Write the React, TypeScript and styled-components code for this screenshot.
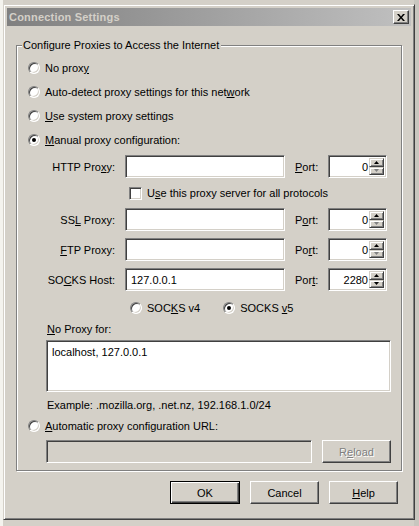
import React from "react";
import styled, { createGlobalStyle } from "styled-components";

const GlobalStyle = createGlobalStyle`
  html, body {
    margin: 0;
    padding: 0;
  }
  body {
    background: linear-gradient(90deg, #f4f3ee 0 3px, #d4d0c8 3px 414px, #c9c6bf 414px);
    font-family: "Liberation Sans", Tahoma, Arial, sans-serif;
    font-size: 11px;
    color: #000;
  }
`;

const Screen = styled.div`
  width: 419px;
  height: 526px;
  padding: 4px 0 0 3px;
  box-sizing: border-box;
  overflow: hidden;
`;

const Window = styled.div`
  width: 412px;
  height: 516px;
  box-sizing: border-box;
  background: #d4d0c8;
  border: 1px solid;
  border-color: #d4d0c8 #404040 #404040 #d4d0c8;
  box-shadow: inset 1px 1px 0 #fff, inset -1px -1px 0 #808080;
  padding: 3px;
  display: flex;
  flex-direction: column;
`;

const TitleBar = styled.div`
  height: 18px;
  display: flex;
  align-items: center;
  justify-content: space-between;
  background: linear-gradient(90deg, #808080, #c0c0c0);
  padding: 0 2px 0 2px;
`;

const TitleText = styled.span`
  font-weight: bold;
  color: #d4d0c8;
  font-size: 11px;
  letter-spacing: 0.2px;
`;

const CloseButton = styled.div`
  width: 16px;
  height: 14px;
  box-sizing: border-box;
  background: #d4d0c8;
  border: 1px solid;
  border-color: #fff #404040 #404040 #fff;
  box-shadow: inset -1px -1px 0 #808080;
  display: flex;
  align-items: center;
  justify-content: center;
`;

const Body = styled.div`
  flex: 1;
  display: flex;
  flex-direction: column;
  padding: 13px 12px 0 9px;
`;

const Group = styled.fieldset`
  margin: 0;
  width: 382px;
  box-sizing: border-box;
  height: 432px;
  border: 1px solid #808080;
  box-shadow: inset 1px 1px 0 #fff, 1px 1px 0 #fff;
  padding: 8px 10px 0 11px;
  display: flex;
  flex-direction: column;
`;

const Legend = styled.legend`
  padding: 0 2px 0 1px;
  margin-left: -6px;
  line-height: 13px;
  background: #d4d0c8;
`;

const RadioRow = styled.label<{ $top?: number }>`
  display: flex;
  align-items: center;
  gap: 5px;
  height: 16px;
  margin-top: ${(p) => p.$top ?? 8}px;
  white-space: nowrap;
`;

const RadioCircle = styled.span<{ $checked?: boolean }>`
  width: 12px;
  height: 12px;
  flex: none;
  box-sizing: border-box;
  border-radius: 50%;
  border: 1px solid;
  border-color: #808080 #fff #fff #808080;
  background: #fff;
  box-shadow: inset 1px 1px 0 #404040, inset -1px -1px 0 #d4d0c8;
  display: flex;
  align-items: center;
  justify-content: center;

  &::after {
    content: "";
    display: ${(p) => (p.$checked ? "block" : "none")};
    width: 4px;
    height: 4px;
    border-radius: 50%;
    background: #000;
  }
`;

const U = styled.span`
  text-decoration: underline;
  text-underline-offset: 1px;
`;

const ProxyGrid = styled.div`
  display: grid;
  grid-template-columns: 87px 160px 23px 59px;
  column-gap: 10px;
  row-gap: 7px;
  margin-top: 7px;
  align-items: center;
`;

const FieldLabel = styled.span`
  text-align: right;
  white-space: nowrap;
`;

const PortLabel = styled.span`
  white-space: nowrap;
`;

const Sunken = styled.div`
  box-sizing: border-box;
  border: 1px solid;
  border-color: #808080 #fff #fff #808080;
  box-shadow: inset 1px 1px 0 #404040, inset -1px -1px 0 #d4d0c8;
  background: #fff;
`;

const TextField = styled(Sunken)<{ $disabled?: boolean }>`
  height: 23px;
  display: flex;
  align-items: center;
  padding: 0 5px;
  background: ${(p) => (p.$disabled ? "#d4d0c8" : "#fff")};
`;

const SpinBox = styled(Sunken)`
  height: 23px;
  display: flex;
  align-items: stretch;
  padding: 2px;
`;

const SpinValue = styled.span`
  flex: 1;
  display: flex;
  align-items: center;
  justify-content: flex-end;
  padding-right: 1px;
`;

const SpinButtons = styled.div`
  width: 15px;
  display: flex;
  flex-direction: column;
`;

const SpinButton = styled.div`
  flex: 1;
  box-sizing: border-box;
  background: #d4d0c8;
  border: 1px solid;
  border-color: #d4d0c8 #404040 #404040 #d4d0c8;
  box-shadow: inset 1px 1px 0 #fff, inset -1px -1px 0 #808080;
  display: flex;
  align-items: center;
  justify-content: center;
`;

const CheckRow = styled.label`
  grid-column: 2 / 5;
  display: flex;
  align-items: center;
  gap: 5px;
  height: 16px;
  padding-left: 4px;
  white-space: nowrap;
`;

const CheckBox = styled(Sunken)`
  width: 13px;
  height: 13px;
  flex: none;
`;

const VersionRow = styled.div`
  display: flex;
  gap: 23px;
  margin: 9px 0 0 102px;
`;

const Indented = styled.div`
  margin-left: 18px;
  display: flex;
  flex-direction: column;
`;

const Caption = styled.div<{ $top: number }>`
  line-height: 14px;
  margin-top: ${(p) => p.$top}px;
  padding-left: 1px;
  white-space: nowrap;
`;

const TextArea = styled(Sunken)`
  width: 345px;
  height: 52px;
  margin-top: 4px;
  padding: 4px 5px;
  line-height: 14px;
`;

const UrlRow = styled.div`
  display: flex;
  gap: 10px;
  margin-top: 6px;
`;

const Button = styled.div<{ $default?: boolean; $disabled?: boolean }>`
  width: ${(p) => (p.$default ? 70 : 69)}px;
  height: 23px;
  box-sizing: border-box;
  background: #d4d0c8;
  border: 1px solid;
  border-color: ${(p) => (p.$default ? "#000" : "#fff #404040 #404040 #fff")};
  box-shadow: ${(p) =>
    p.$default
      ? "inset 1px 1px 0 #fff, inset -1px -1px 0 #404040, inset -2px -2px 0 #808080"
      : "inset -1px -1px 0 #808080"};
  display: flex;
  align-items: center;
  justify-content: center;
  color: ${(p) => (p.$disabled ? "#808080" : "#000")};
  text-shadow: ${(p) => (p.$disabled ? "1px 1px 0 #fff" : "none")};
`;

const ButtonRow = styled.div`
  display: flex;
  justify-content: flex-end;
  gap: 10px;
  margin-top: 10px;
  padding-right: 1px;
`;

const Arrow = ({ up, disabled }: { up?: boolean; disabled?: boolean }) => (
  <svg width="5" height="3" viewBox="0 0 5 3">
    <polygon
      points={up ? "2.5,0 5,3 0,3" : "0,0 5,0 2.5,3"}
      fill={disabled ? "#808080" : "#000"}
    />
  </svg>
);

const Spin = ({ value, downDisabled }: { value: string; downDisabled?: boolean }) => (
  <SpinBox>
    <SpinValue>{value}</SpinValue>
    <SpinButtons>
      <SpinButton>
        <Arrow up />
      </SpinButton>
      <SpinButton>
        <Arrow disabled={downDisabled} />
      </SpinButton>
    </SpinButtons>
  </SpinBox>
);

const Radio = ({ checked, children, top }: { checked?: boolean; children: React.ReactNode; top?: number }) => (
  <RadioRow $top={top}>
    <RadioCircle $checked={checked} />
    <span>{children}</span>
  </RadioRow>
);

const App = () => {
  return (
    <Screen>
      <GlobalStyle />
      <Window>
        <TitleBar>
          <TitleText>Connection Settings</TitleText>
          <CloseButton>
            <svg width="8" height="7" viewBox="0 0 8 7">
              <path d="M0 0h2l2 2.5L6 0h2L5 3.5 8 7H6L4 4.5 2 7H0l3-3.5z" fill="#000" />
            </svg>
          </CloseButton>
        </TitleBar>
        <Body>
          <Group>
            <Legend>Configure Proxies to Access the Internet</Legend>
            <Radio top={0}>
              No prox<U>y</U>
            </Radio>
            <Radio>
              Auto-detect proxy settings for this net<U>w</U>ork
            </Radio>
            <Radio>
              <U>U</U>se system proxy settings
            </Radio>
            <Radio checked>
              <U>M</U>anual proxy configuration:
            </Radio>
            <ProxyGrid>
              <FieldLabel>
                HTTP Pro<U>x</U>y:
              </FieldLabel>
              <TextField />
              <PortLabel>
                <U>P</U>ort:
              </PortLabel>
              <Spin value="0" downDisabled />

              <CheckRow>
                <CheckBox />
                <span>
                  U<U>s</U>e this proxy server for all protocols
                </span>
              </CheckRow>

              <FieldLabel>
                SS<U>L</U> Proxy:
              </FieldLabel>
              <TextField />
              <PortLabel>
                P<U>o</U>rt:
              </PortLabel>
              <Spin value="0" downDisabled />

              <FieldLabel>
                <U>F</U>TP Proxy:
              </FieldLabel>
              <TextField />
              <PortLabel>
                Po<U>r</U>t:
              </PortLabel>
              <Spin value="0" downDisabled />

              <FieldLabel>
                SO<U>C</U>KS Host:
              </FieldLabel>
              <TextField>127.0.0.1</TextField>
              <PortLabel>
                Por<U>t</U>:
              </PortLabel>
              <Spin value="2280" />
            </ProxyGrid>
            <VersionRow>
              <Radio top={0}>
                SOC<U>K</U>S v4
              </Radio>
              <Radio top={0} checked>
                SOCKS <U>v</U>5
              </Radio>
            </VersionRow>
            <Indented>
              <Caption $top={6}>
                <U>N</U>o Proxy for:
              </Caption>
              <TextArea>localhost, 127.0.0.1</TextArea>
              <Caption $top={6}>Example: .mozilla.org, .net.nz, 192.168.1.0/24</Caption>
            </Indented>
            <Radio top={6}>
              <U>A</U>utomatic proxy configuration URL:
            </Radio>
            <Indented>
              <UrlRow>
                <TextField $disabled style={{ width: 266 }} />
                <Button $disabled>
                  R<U>e</U>load
                </Button>
              </UrlRow>
            </Indented>
          </Group>
          <ButtonRow>
            <Button $default>OK</Button>
            <Button>Cancel</Button>
            <Button>
              <U>H</U>elp
            </Button>
          </ButtonRow>
        </Body>
      </Window>
    </Screen>
  );
};

export default App;
